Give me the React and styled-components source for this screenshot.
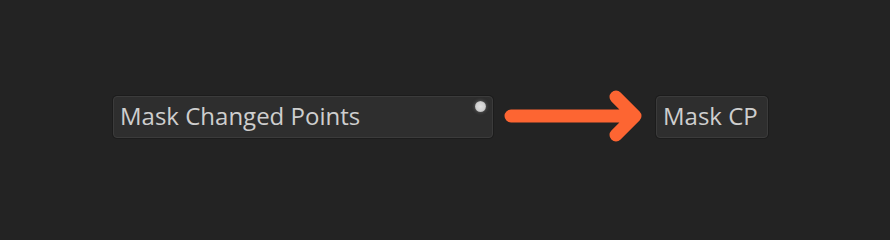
import React from 'react';
import styled, { createGlobalStyle } from 'styled-components';

const GlobalStyle = createGlobalStyle`
  html, body {
    margin: 0;
    padding: 0;
    background: #232323;
  }
`;

const Canvas = styled.div`
  width: 890px;
  height: 239px;
  box-sizing: border-box;
  padding: 96px 0 0 113px;
  display: flex;
  align-items: flex-start;
  font-family: "Open Sans", "Noto Sans", sans-serif;
`;

const Field = styled.div`
  position: relative;
  box-sizing: border-box;
  width: ${props => props.width}px;
  height: 42px;
  padding: 0 6px 3px;
  display: flex;
  align-items: center;
  background: #2e2e2e;
  border: 1px solid #3b3b3b;
  border-radius: 4px;
  box-shadow: 0 0 0 1px #1c1c1c;
  color: #cecece;
  font-size: 24px;
  white-space: nowrap;
`;

const Dot = styled.span`
  position: absolute;
  top: 4px;
  right: 6px;
  width: 11px;
  height: 11px;
  border-radius: 50%;
  background: radial-gradient(circle, #e0e0e0 0%, #cfcfcf 55%, #8a8a8a 100%);
  box-shadow: 0 0 3px 1px rgba(110, 110, 110, 0.55);
`;

const Arrow = styled.svg`
  display: block;
  margin: -7px 13px 0 10px;
  flex-shrink: 0;
`;

export default function App() {
  return (
    <>
      <GlobalStyle />
      <Canvas>
        <Field width={380}>
          Mask Changed Points
          <Dot />
        </Field>
        <Arrow width="140" height="58" viewBox="0 0 140 58">
          <path
            d="M8 27 H132 M113 8 L132 27 L113 46"
            fill="none"
            stroke="#fd6532"
            strokeWidth="13"
            strokeLinecap="round"
            strokeLinejoin="round"
          />
        </Arrow>
        <Field width={112}>Mask CP</Field>
      </Canvas>
    </>
  );
}
